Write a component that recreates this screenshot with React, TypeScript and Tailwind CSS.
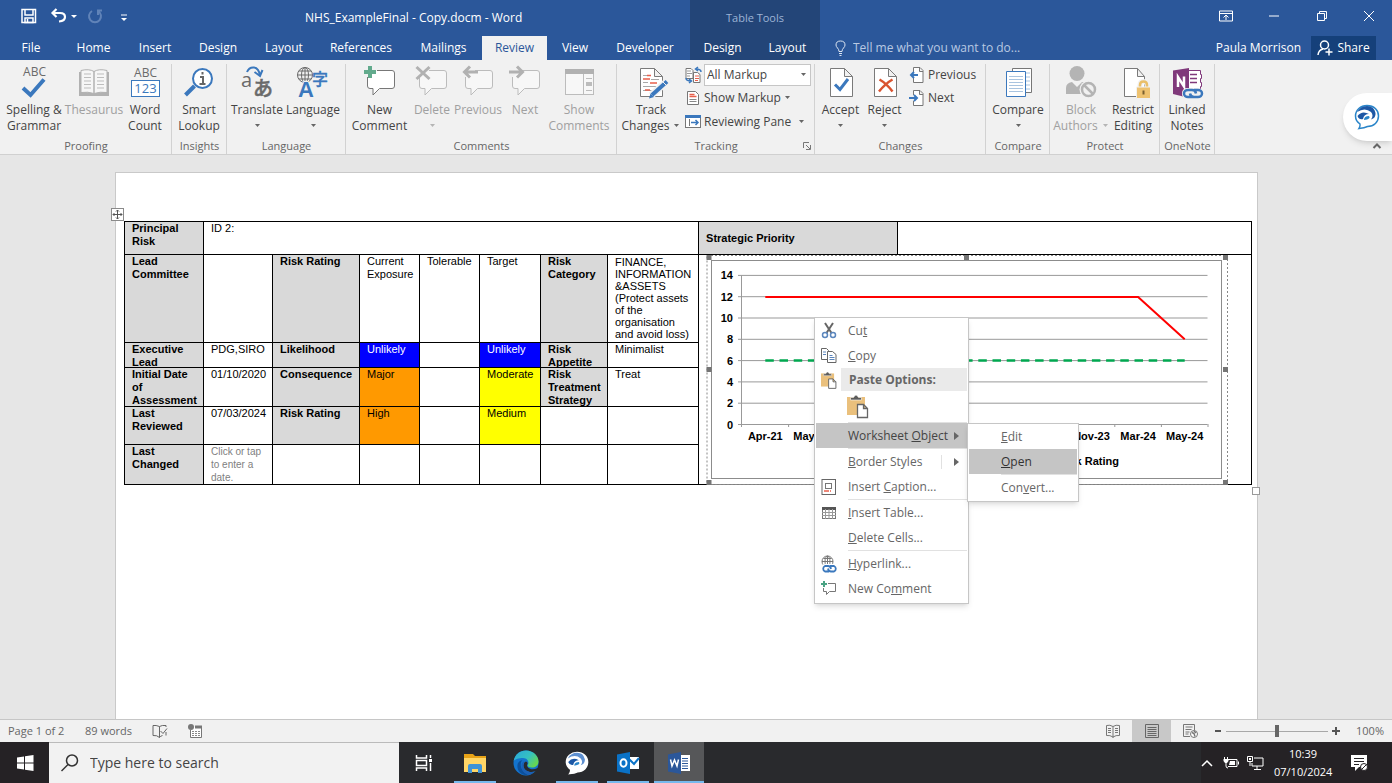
import type {ReactNode} from 'react';

const GREY = '#6a6a6a';
const BLUE = '#3b78bd';
const DIM = '#b1b1b1';

const Icon = ({w = 40, h = 38, children}: { w?: number; h?: number; children: ReactNode }) => (
    <svg width={w} height={h} viewBox={`0 0 ${w} ${h}`} fill="none" className="shrink-0 overflow-visible" aria-hidden="true">
        {children}
    </svg>
);

const Caret = ({dim = false}: { dim?: boolean }) => (
    <svg width="7" height="4" viewBox="0 0 7 4" className="inline-block shrink-0" aria-hidden="true">
        <path d="M1 0h5L3.500 3z" fill={dim ? '#b5b5b5' : '#666'}/>
    </svg>
);

/* ---------- large ribbon icons, 40 x 38 ---------- */

const DocShape = () => (
    <path d="M9.500 4.500h14l8 8v20h-22zM23.500 4.500v8h8" fill="#fff" stroke="#7a7a7a"/>
);

const SpellingIcon = () => (
    <Icon>
        <text x="20.500" y="12" textAnchor="middle" fontSize="12" fontWeight="500" fill={GREY} fontFamily="Open Sans">ABC</text>
        <path d="M9 24l7.500 7L30 15.500" stroke={BLUE} strokeWidth="4"/>
    </Icon>
);

const ThesaurusIcon = () => (
    <Icon>
        <path d="M5 8v24h30V8z" fill={DIM}/>
        <path d="M7 6.500q8-2 13 1v22q-6-2-13-1zM33 6.500q-8-2-13 1v22q6-2 13-1z" fill="#f6f6f6" stroke={DIM}/>
        <path d="M10 10h7M10 13.500h7M10 17h7M10 20.500h7M10 24h7M23 10h7M23 13.500h7M23 17h7M23 20.500h7M23 24h7" stroke="#bdbdbd"/>
    </Icon>
);

const WordCountIcon = () => (
    <Icon>
        <text x="20.500" y="13" textAnchor="middle" fontSize="12" fontWeight="500" fill={GREY} fontFamily="Open Sans">ABC</text>
        <rect x="6.500" y="16.500" width="28" height="16" fill="#fff" stroke={BLUE}/>
        <text x="20.500" y="29" textAnchor="middle" fontSize="13" fill={BLUE} fontFamily="Open Sans">123</text>
    </Icon>
);

const LookupIcon = () => (
    <Icon>
        <path d="M15.500 22l-9 9" stroke={BLUE} strokeWidth="4"/>
        <circle cx="23.500" cy="14.500" r="9.500" fill="#fff" stroke={BLUE} strokeWidth="2"/>
        <path d="M23.500 8v2.500M21 13h3v6.500M20.500 20h6" stroke="#666" strokeWidth="2"/>
    </Icon>
);

const TranslateIcon = () => (
    <Icon>
        <text x="4" y="23" fontSize="20" fontWeight="500" fill={GREY} fontFamily="Open Sans">a</text>
        <text x="16" y="32" fontSize="20" fontWeight="500" fill={GREY} stroke={GREY} strokeWidth=".500"
              fontFamily="Noto Sans CJK JP">あ</text>
        <path d="M10 8q2-5 7-4.500t6 8.500M17.500 8l5.500 4 2.500-6" stroke={BLUE} strokeWidth="2"/>
    </Icon>
);

const LanguageIcon = () => (
    <Icon>
        <circle cx="12" cy="11" r="7.500" stroke={GREY}/>
        <ellipse cx="12" cy="11" rx="3.500" ry="7.500" stroke={GREY}/>
        <path d="M4.500 11h15M6 7h12M6 15h12M12 3.500v15" stroke={GREY}/>
        <text x="19" y="21" fontSize="16" fontWeight="500" fill={BLUE} stroke={BLUE} strokeWidth=".300"
              fontFamily="Noto Sans CJK JP">字</text>
        <text x="5" y="33" fontSize="22" fontWeight="600" fill={BLUE} stroke="#f1f1f1" strokeWidth="2" paintOrder="stroke"
              fontFamily="Liberation Sans">A</text>
    </Icon>
);

const BubbleIcon = ({mark, dim = true}: { mark: ReactNode; dim?: boolean }) => (
    <Icon>
        <path d="M7.500 13v9q0 2.500 2.500 2.500h3v6.500l6.500-6.500H32q2.500 0 2.500-2.500V9q0-2.500-2.500-2.500H17"
              fill={dim ? '#f7f7f7' : '#fff'} stroke={dim ? '#bcbcbc' : '#777'}/>
        {mark}
    </Icon>
);

const PlusMark = () => <path d="M10 2v12M4 8h12" stroke="#62aa8c" strokeWidth="4"/>;
const CrossMark = () => <path d="M4.500 3l13 12M17.500 3l-13 12" stroke={DIM} strokeWidth="3"/>;
const LeftMark = () => <path d="M20 8H7M12 2.500L6.500 8l5.500 5.500" stroke={DIM} strokeWidth="3"/>;
const RightMark = () => <path d="M4 8h13M12 2.500L17.500 8 12 13.500" stroke={DIM} strokeWidth="3"/>;

const ShowCommentsIcon = () => (
    <Icon>
        <rect x="6.500" y="5.500" width="28" height="25" fill="#f7f7f7" stroke="#bcbcbc"/>
        <rect x="6" y="5" width="29" height="5" fill={DIM}/>
        <path d="M24.500 10v20M27 14.500h6M27 26.500h6" stroke="#bcbcbc"/>
        <path d="M27 20h6" stroke="#bcbcbc" strokeWidth="4"/>
    </Icon>
);

const TrackIcon = () => (
    <Icon>
        <DocShape/>
        <path d="M12 11.500h8M12 18.500h5M12 22.500h13M12 26.500h10M20 15.500h8" stroke="#a8a8a8"/>
        <path d="M16 11.500h4M12 15h7M19 19h7M14 26h5" stroke="#e8604c" strokeWidth="1.500"/>
        <path d="M36 17.500L20 31.500" stroke="#f1f1f1" strokeWidth="7"/>
        <path d="M36 17.500L21 31" stroke={BLUE} strokeWidth="4"/>
        <path d="M19.500 29.500l3.500 3.500-5 1.500z" fill={BLUE}/>
        <path d="M32 18l3.500 3.500" stroke="#f1f1f1"/>
    </Icon>
);

const AcceptIcon = () => (
    <Icon><DocShape/><path d="M14 20.500l5 5L27 15" stroke={BLUE} strokeWidth="3"/></Icon>
);

const RejectIcon = () => (
    <Icon><DocShape/><path d="M14.500 15.500q7 4 13 12M27.500 15.500q-7 4-13.500 12" stroke="#d9532f" strokeWidth="2.500"/></Icon>
);

const CompareIcon = () => (
    <Icon>
        <path d="M14.500 4.500h19v24h-19z" fill="#fff" stroke="#777"/>
        <path d="M28 9h4M28 13h4M28 17h4M28 21h4M28 25h4" stroke="#a9c4e0"/>
        <path d="M8.500 7.500h19v25h-19z" fill="#fff" stroke={BLUE}/>
        <path d="M11 12.500h14M11 15.500h14M11 18.500h14M11 21.500h14M11 24.500h14M11 27.500h14" stroke="#a9c4e0"/>
    </Icon>
);

const BlockIcon = () => (
    <Icon>
        <circle cx="16" cy="9.500" r="7.500" fill="#b4b4b4"/>
        <path d="M5 30v-6q0-5 6-6l5 5 5-5q6 1 6 6v6z" fill="#b4b4b4"/>
        <circle cx="27.500" cy="25.500" r="9" fill="#f1f1f1"/>
        <circle cx="27.500" cy="25.500" r="6.500" fill="#f1f1f1" stroke="#b4b4b4" strokeWidth="2.500"/>
        <path d="M23 21l9 9" stroke="#b4b4b4" strokeWidth="2.500"/>
    </Icon>
);

const RestrictIcon = () => (
    <Icon>
        <path d="M11.500 4.500h13l7 8v20h-20zM24.500 4.500v8h7" fill="#fff" stroke="#7a7a7a"/>
        <path d="M27 24v-3q0-3.500 3.500-3.500T34 21v3" stroke="#f1f1f1" strokeWidth="5"/>
        <path d="M27 24v-3q0-3.500 3.500-3.500T34 21v3" stroke="#eabf69" strokeWidth="2.500"/>
        <path d="M23.500 23h14v11.500h-14z" fill="#eec270" stroke="#f1f1f1"/>
        <path d="M30.500 26.500v4" stroke="#7a6030" strokeWidth="2"/>
    </Icon>
);

const NotesIcon = () => (
    <Icon>
        <path d="M20.500 6.500h13v4h1v4h-1v4h1v4h-1v5h-13z" fill="#fff" stroke="#80397b"/>
        <path d="M23 10.500h7M23 14.500h7M23 18.500h7" stroke="#80397b" strokeWidth="1.500"/>
        <path d="M6 6.500L22 4v30L6 30z" fill="#80397b"/>
        <path d="M11 23v-10l6 9.500V12.500" stroke="#fff" strokeWidth="2.500"/>
        <rect x="15" y="24" width="21" height="11" fill="#f1f1f1" rx="5"/>
        <path d="M25 33h-4a4 3.500 0 010-7h4q3.500 0 4 3.500M27 26h4a4 3.500 0 010 7h-4q-3.500 0-4-3.500" stroke={BLUE} strokeWidth="2.500"/>
    </Icon>
);

/* ---------- small icons ---------- */

const MarkupViewIcon = () => (
    <Icon w={16} h={16}>
        <path d="M1 1.500h5l2 2v8H1zM8.500 5.500h4l2.500 2v8H8.500z" fill="#fff" stroke="#777"/>
        <path d="M2 4h4M2 6.500h5M2 9h3" stroke="#999"/>
        <path d="M10 9h4M10 11.500h4M10 13.500h3" stroke="#e8604c"/>
        <path d="M16 5q0-3-5-3M13 0l-2.500 2L13 4M1 11q0 3 5 3M4 12l2.500 2L4 16" stroke={BLUE} strokeWidth="1.500"/>
    </Icon>
);

const ShowMarkupIcon = () => (
    <Icon w={16} h={16}>
        <path d="M2.500 1.500h8l3 3v10h-11z" fill="#fff" stroke="#777"/>
        <path d="M4.500 4.500h5M4.500 6.500h7" stroke="#e8604c" strokeWidth="1.500"/>
        <path d="M4.500 9.500h7M4.500 11.500h7" stroke="#888"/>
    </Icon>
);

const PaneIcon = () => (
    <Icon w={16} h={16}>
        <rect x=".500" y="1.500" width="15" height="12" fill="#fff" stroke="#777"/>
        <path d="M0 2.500h16" stroke={BLUE} strokeWidth="3"/>
        <path d="M4.500 5v7" stroke="#777"/>
        <path d="M6 8.500h7M10.500 6l2.500 2.500-2.500 2.500" stroke={BLUE} strokeWidth="1.500"/>
    </Icon>
);

const DocArrowIcon = ({back = false}: { back?: boolean }) => (
    <Icon w={16} h={16}>
        <path d="M4.500 5V.500H11l3 3v12H4.500V11M10.500.500v4H14" fill="#fff" stroke="#777"/>
        <path d={back ? 'M9 8H2M5 5L2 8l3 3' : 'M0 8h7M5 5l3 3-3 3'} stroke={BLUE} strokeWidth="2"/>
    </Icon>
);

const CutIcon = () => (
    <Icon w={16} h={16}>
        <path d="M4 0l6.500 10M12 0L5.500 10" stroke="#666" strokeWidth="2"/>
        <circle cx="4" cy="12" r="2.500" stroke="#5b86bd" strokeWidth="1.500"/>
        <circle cx="12" cy="12" r="2.500" stroke="#5b86bd" strokeWidth="1.500"/>
    </Icon>
);

const CopyIcon = () => (
    <Icon w={16} h={16}>
        <path d="M.500.500h5l2 2v9h-7z" fill="#fff" stroke="#666"/>
        <path d="M6.500 3.500h5l3.500 3v8H6.500z" fill="#fff" stroke="#666"/>
        <path d="M2 4h3M2 6.500h3M8.500 7.500h3M8.500 9.500h5M8.500 11.500h5" stroke="#5b86bd"/>
    </Icon>
);

const PasteIcon = ({size = 16}: { size?: number }) => (
    <svg width={size} height={size} viewBox="0 0 22 22" fill="none" className="shrink-0 overflow-visible" aria-hidden="true">
        <path d="M0 2h18v18H0z" fill="#eac07c"/>
        <path d="M3.500 5V2.500h3q2.500-5 5 0h3V5z" fill="#5c5c5c" stroke="#fff" strokeWidth=".600"/>
        <path d="M10.500 9.500h6l4 4v9h-10zM16.500 9.500v4h4" fill="#fff" stroke="#666" strokeWidth="1.300"/>
    </svg>
);

const CaptionIcon = () => (
    <Icon w={16} h={16}>
        <rect x="1" y=".500" width="13.500" height="15" fill="#fff" stroke="#666"/>
        <rect x="4.500" y="4.500" width="6" height="5" stroke="#777"/>
        <path d="M3 12h5M9 12h1" stroke="#e8604c" strokeWidth="1.500"/>
    </Icon>
);

const TableIcon = () => (
    <Icon w={16} h={16}>
        <rect x="1.500" y="2.500" width="13" height="11" fill="#fff" stroke="#777"/>
        <path d="M1 3.500h14" stroke="#555" strokeWidth="3"/>
        <path d="M1 7.500h14M1 10.500h14M4.500 4v10M8 4v10M11.500 4v10" stroke="#999"/>
    </Icon>
);

const LinkIcon = () => (
    <Icon w={16} h={16}>
        <circle cx="6.500" cy="5.500" r="5.500" stroke="#777"/>
        <path d="M1 5.500h11M6.500 0v11M2.500 2.500h8M2.500 8.500h8" stroke="#777"/>
        <ellipse cx="6.500" cy="5.500" rx="2.500" ry="5.500" stroke="#777"/>
        <rect x="0" y="8" width="17" height="9" rx="4" fill="#fff"/>
        <path d="M8 15.500H4a3 3 0 010-5.500h3q2.500 0 3 3M9 10h4a3 3 0 010 5.500h-3q-2.500 0-3-3" stroke={BLUE} strokeWidth="1.800"/>
    </Icon>
);

const CommentIcon = () => (
    <Icon w={16} h={16}>
        <path d="M7 2.500h7.500v8H8.500l-3 3v-3h-3V7" stroke="#777"/>
        <path d="M3 0v6M0 3h6" stroke="#4aa384" strokeWidth="2"/>
    </Icon>
);

const ChatLogo = ({size, light = false}: { size: number; light?: boolean }) => (
    <svg width={size} height={size} viewBox="0 0 26 26" fill="none" aria-hidden="true">
        <path d="M13 1.500c7 0 11.500 4.500 11.500 10.500S20 22.500 13.500 22.500q-3 1.500-8.500 2 1.500-2 1-4.500C3 18 1.500 15.500 1.500 12 1.500 6 6.500 1.500 13 1.500z"
              fill="#fff" stroke={light ? '#fff' : '#2a85c9'} strokeWidth="1.500"/>
        <path d="M3 8q3.500-6 10-6 7 0 8.500 7 .500 5-4.500 6.500 3-4 0-7.500Q11 3 3 8z" fill={light ? '#5d8fd0' : '#1d57a5'}/>
        <path d="M3.500 12Q8 6 15 10q-5 0-6 5-4 1-5.500-3z" fill="#1d57a5"/>
        <path d="M10 16q0-4 5-4 2.500 3-5 4z" fill="#2a85c9"/>
    </svg>
);

/* ---------- title bar and tabs ---------- */

const TABS = [
    {name: 'File', width: 'w-[62px]'},
    {name: 'Home', width: 'w-[63px]'},
    {name: 'Insert', width: 'w-[60px]'},
    {name: 'Design', width: 'w-[66px]'},
    {name: 'Layout', width: 'w-[66px]'},
    {name: 'References', width: 'w-[88px]'},
    {name: 'Mailings', width: 'w-[77px]'},
    {name: 'Review', width: 'w-[65px]'},
    {name: 'View', width: 'w-[56px]'},
    {name: 'Developer', width: 'w-[84px]'},
];

const TitleBar = () => (
    <header className="flex h-[60px] shrink-0 bg-[#2b579a] text-white">
        <div className="flex w-[690px] shrink-0 flex-col">
            <div className="flex h-9 items-center pl-[21px]">
                <button aria-label="Save" className="mb-1">
                    <Icon w={16} h={16}>
                        <path d="M1 1.500h13.500v13H1zM4 1.500v5.500h8V1.500" stroke="#fff" strokeWidth="1.500"/>
                        <path d="M4 10h8v4.500H4zM6.500 11v3" stroke="#fff" strokeWidth="1.500"/>
                    </Icon>
                </button>
                <button aria-label="Undo" className="mb-1 ml-3.5 flex items-center gap-1">
                    <Icon w={16} h={16}>
                        <path d="M5.500 1L1.500 5l4 4M2 5h7q5 0 5 4t-6 4.500" stroke="#fff" strokeWidth="2.200"/>
                    </Icon>
                    <svg width="6" height="3" aria-hidden="true"><path d="M0 0h6L3 3z" fill="#fff"/></svg>
                </button>
                <button aria-label="Repeat" className="mb-1 ml-2.5">
                    <Icon w={16} h={16}>
                        <path d="M5 3a6 6 0 106 0M11 7V2.500h4" stroke="#6083b8" strokeWidth="2"/>
                    </Icon>
                </button>
                <button aria-label="Customise toolbar" className="ml-[18px]">
                    <svg width="6" height="8" aria-hidden="true"><path d="M0 1h6" stroke="#fff"/><path d="M0 4h6L3 7z" fill="#fff"/></svg>
                </button>
                <h1 className="ml-[178px] text-xs">NHS_ExampleFinal - Copy.docm - Word</h1>
            </div>
            <nav className="flex h-6 text-xs">
                {TABS.map(({name, width}) => (
                    <button key={name} className={`${width} ${name === 'Review' ? 'bg-[#f1f1f1] text-[#2b579a]' : ''}`}>
                        {name}
                    </button>
                ))}
            </nav>
        </div>
        <div className="flex w-[130px] shrink-0 flex-col bg-[#234578] text-xs">
            <div className="flex h-9 items-center justify-center text-[11px] text-[#9db4d6]">Table Tools</div>
            <nav className="grid h-6 grid-cols-2">
                <button>Design</button>
                <button>Layout</button>
            </nav>
        </div>
        <div className="flex min-w-0 flex-1 flex-col text-xs">
            <div className="flex h-9 items-center justify-end gap-[33px] pb-1 pr-4">
                <button aria-label="Ribbon display options">
                    <Icon w={14} h={12}>
                        <path d="M.500 1h13v10H.500zM.500 3.500h13M7 10V5.500M4.500 7.500L7 5l2.500 2.500" stroke="#fff"/>
                    </Icon>
                </button>
                <button aria-label="Minimise"><Icon w={16} h={12}><path d="M3 6h10" stroke="#fff"/></Icon></button>
                <button aria-label="Restore">
                    <Icon w={14} h={12}><path d="M2.500 3.500h7v7h-7zM4.500 3V1.500h7v7H10" stroke="#fff"/></Icon>
                </button>
                <button aria-label="Close"><Icon w={14} h={12}><path d="M2 1l10 10M12 1L2 11" stroke="#fff"/></Icon></button>
            </div>
            <div className="flex h-6 items-center pr-4">
                <label className="ml-[15px] flex min-w-0 flex-1 items-center gap-1.5">
                    <Icon w={12} h={16}>
                        <path d="M4 11.500q0-2-1.500-3.500T1 5q0-4 4.500-4T10 5q0 1.500-1.500 3T7 11.500zM4 13.500h3M4.500 15.500h2" stroke="#dbe4f1"/>
                    </Icon>
                    <input aria-label="Tell me" placeholder="Tell me what you want to do..."
                           className="w-full min-w-0 bg-transparent outline-none placeholder:text-[#b9c9e2]"/>
                </label>
                <span className="mr-2.5">Paula Morrison</span>
                <button className="flex h-6 w-[65px] items-center justify-center gap-1 bg-[#15407a]">
                    <Icon w={16} h={16}>
                        <circle cx="7.500" cy="5" r="4" stroke="#fff" strokeWidth="1.500"/>
                        <path d="M1 15q.500-5 5-6M12 8.500v7M8.500 12h7" stroke="#fff" strokeWidth="1.500"/>
                    </Icon>
                    Share
                </button>
            </div>
        </div>
    </header>
);

/* ---------- ribbon ---------- */

interface BigButtonProps {
    icon: ReactNode;
    first: string;
    second?: ReactNode;
    width: string;
    dim?: boolean;
}

const BigButton = ({icon, first, second, width, dim}: BigButtonProps) => (
    <button className={`${width} flex shrink-0 flex-col items-center whitespace-nowrap ${dim ? 'text-[#a0a0a0]' : ''}`} disabled={dim}>
        {icon}
        <span>{first}</span>
        <span className="flex h-4 items-center gap-1">{second}</span>
    </button>
);

const Group = ({name, width, children}: { name: string; width: string; children: ReactNode }) => (
    <section className={`${width} flex shrink-0 flex-col`}>
        <div className="relative flex flex-1">
            {children}
            <span className="absolute -bottom-4 right-0 top-0 w-px bg-[#d2d2d2]"/>
        </div>
        <h2 className="h-4 text-center text-[11px] text-[#666]">{name}</h2>
    </section>
);

const Ribbon = () => (
    <div className="relative flex h-[95px] shrink-0 border-b border-[#d0d0d0] bg-[#f1f1f1] pt-1 text-[12px] leading-4 text-[#444]">
        <Group name="Proofing" width="w-[172px]">
            <BigButton icon={<SpellingIcon/>} first="Spelling &" second="Grammar" width="w-[68px]"/>
            <BigButton icon={<ThesaurusIcon/>} first="Thesaurus" width="w-[52px]" dim/>
            <BigButton icon={<WordCountIcon/>} first="Word" second="Count" width="w-[50px]"/>
        </Group>
        <Group name="Insights" width="w-[55px]">
            <BigButton icon={<LookupIcon/>} first="Smart" second="Lookup" width="w-[54px]"/>
        </Group>
        <Group name="Language" width="w-[119px]">
            <BigButton icon={<TranslateIcon/>} first="Translate" second={<Caret/>} width="w-[60px]"/>
            <BigButton icon={<LanguageIcon/>} first="Language" second={<Caret/>} width="w-[52px]"/>
        </Group>
        <Group name="Comments" width="w-[271px]">
            <BigButton icon={<BubbleIcon dim={false} mark={<PlusMark/>}/>} first="New" second="Comment" width="w-[67px]"/>
            <BigButton icon={<BubbleIcon mark={<CrossMark/>}/>} first="Delete" second={<Caret dim/>} width="w-[38px]" dim/>
            <BigButton icon={<BubbleIcon mark={<LeftMark/>}/>} first="Previous" width="w-[54px]" dim/>
            <BigButton icon={<BubbleIcon mark={<RightMark/>}/>} first="Next" width="w-[40px]" dim/>
            <BigButton icon={<ShowCommentsIcon/>} first="Show" second="Comments" width="w-[68px]" dim/>
        </Group>
        <Group name="Tracking" width="w-[198px]">
            <BigButton icon={<TrackIcon/>} first="Track" second={<>Changes <Caret/></>} width="w-[68px]"/>
            <div className="flex flex-1 flex-col pr-1">
                <label className="flex items-center gap-[3px]">
                    <MarkupViewIcon/>
                    <span className="relative flex flex-1 items-center">
                        <select aria-label="Display for review"
                                className="h-[22px] w-full appearance-none border border-[#c6c6c6] bg-white px-0.5">
                            <option>All Markup</option>
                        </select>
                        <span className="absolute right-1 flex"><Caret/></span>
                    </span>
                </label>
                <button className="flex h-6 items-center gap-[3px]"><ShowMarkupIcon/>Show Markup <Caret/></button>
                <button className="flex h-6 items-center gap-[3px]">
                    <PaneIcon/>Reviewing Pane <span className="ml-1 flex"><Caret/></span>
                </button>
            </div>
            <button aria-label="Tracking options" className="absolute -bottom-3 right-1">
                <Icon w={8} h={8}><path d="M.500 6V.500H6M3 3l4 4M7.500 3v4.500H3" stroke="#777"/></Icon>
            </button>
        </Group>
        <Group name="Changes" width="w-[171px]">
            <BigButton icon={<AcceptIcon/>} first="Accept" second={<Caret/>} width="w-[51px]"/>
            <BigButton icon={<RejectIcon/>} first="Reject" second={<Caret/>} width="w-[37px]"/>
            <div className="flex flex-col pl-1.5">
                <button className="flex h-[22px] items-center gap-[3px]"><DocArrowIcon back/>Previous</button>
                <button className="flex h-6 items-center gap-[3px]"><DocArrowIcon/>Next</button>
            </div>
        </Group>
        <Group name="Compare" width="w-[64px]">
            <BigButton icon={<CompareIcon/>} first="Compare" second={<Caret/>} width="w-[64px]"/>
        </Group>
        <Group name="Protect" width="w-[110px]">
            <BigButton icon={<BlockIcon/>} first="Block" second={<>Authors <Caret dim/></>} width="w-[62px]" dim/>
            <BigButton icon={<RestrictIcon/>} first="Restrict" second="Editing" width="w-[42px]"/>
        </Group>
        <Group name="OneNote" width="w-[55px]">
            <BigButton icon={<NotesIcon/>} first="Linked" second="Notes" width="w-[54px]"/>
        </Group>
        <button aria-label="Chat"
                className="absolute right-0 top-[33px] flex h-12 w-[49px] items-center rounded-l-full bg-white pl-[11px] shadow-md">
            <ChatLogo size={26}/>
        </button>
        <button aria-label="Collapse the ribbon" className="absolute bottom-1 right-2.5">
            <Icon w={10} h={8}><path d="M1.500 6L5 2.500 8.500 6" stroke="#666" strokeWidth="2"/></Icon>
        </button>
    </div>
);

/* ---------- document ---------- */

const MONTHS = ['Apr-21', 'May-21', '', '', '', '', '', 'Nov-23', 'Mar-24', 'May-24'];
const STEP = 46.6;
const yOf = (v: number) => 169.5 - v * 10.65;
const xOf = (i: number) => 43 + STEP * (i + 0.5);

const RiskChart = () => (
    <svg width="531" height="229" viewBox="0 0 531 229" className="relative block overflow-visible"
         fontFamily="Liberation Sans" fontWeight="700" fontSize="11">
        <rect x="8" y=".500" width="520.500" height="229" fill="#fff" stroke="#888" strokeDasharray="2 2"/>
        <rect x="12.500" y="5.500" width="510" height="218" fill="#fff" stroke="#8c8c8c"/>
        {[0, 2, 4, 6, 8, 10, 12, 14].map((v) => (
            <g key={v}>
                <path d={`M39 ${yOf(v)}H508.500`} stroke="#999"/>
                <text x="34" y={yOf(v) + 4} textAnchor="end">{v}</text>
            </g>
        ))}
        <path d={`M42.500 ${yOf(14)}V172`} stroke="#999"/>
        {MONTHS.map((m, i) => (
            <g key={i}>
                <path d={`M${43 + STEP * (i + 1)} 169v3`} stroke="#999"/>
                <text x={xOf(i)} y="185" textAnchor="middle">{m}</text>
            </g>
        ))}
        <path d={`M${xOf(0)} 105.500H${xOf(9)}`} stroke="#00a850" strokeWidth="2.400" strokeDasharray="8.500 5.700"/>
        <path d={`M${xOf(0)} 42H${xOf(8)}L${xOf(9)} ${yOf(8)}`} stroke="#f00" strokeWidth="2" fill="none"/>
        <text x="420" y="210" textAnchor="end">Risk Rating</text>
        <path d="M7.500 0h5v5h-5zM265 0h5v5h-5zM524 0h5v5h-5zM7.500 112h5v5h-5zM524 112h5v5h-5zM7.500 225h5v5h-5zM524 225h5v5h-5z"
              fill="#757575"/>
    </svg>
);

const FILLS = {
    grey: 'bg-[#d9d9d9] font-bold',
    blue: 'bg-[#0000ff] text-white',
    orange: 'bg-[#ff9900]',
    yellow: 'bg-[#ffff00]',
    none: '',
};

interface CellProps {
    fill?: keyof typeof FILLS;
    text?: ReactNode;
    span?: number;
}

const Cell = ({fill = 'none', text, span}: CellProps) => (
    <td colSpan={span} className={`border border-black p-0 align-top ${FILLS[fill]}`}>
        <div className="h-0 whitespace-nowrap pl-[7px]">{text}</div>
    </td>
);

const RiskTable = () => (
    <table className="w-full table-fixed border-collapse text-[11px] leading-[13px] text-black [font-family:'Liberation_Sans',sans-serif]">
        <colgroup>
            <col className="w-[79px]"/>
            <col className="w-[69px]"/>
            <col className="w-[87px]"/>
            <col className="w-[60px]"/>
            <col className="w-[60px]"/>
            <col className="w-[61px]"/>
            <col className="w-[67px]"/>
            <col className="w-[91px]"/>
            <col className="w-[199px]"/>
            <col/>
        </colgroup>
        <tbody>
        <tr className="h-[33px]">
            <Cell fill="grey" text={<>Principal<br/>Risk</>}/>
            <Cell text="ID 2:" span={7}/>
            <th className="border border-black bg-[#d9d9d9] py-0 pl-[7px] text-left align-middle">Strategic Priority</th>
            <Cell/>
        </tr>
        <tr className="h-[88px]">
            <Cell fill="grey" text={<>Lead<br/>Committee</>}/>
            <Cell/>
            <Cell fill="grey" text="Risk Rating"/>
            <Cell text={<>Current<br/>Exposure</>}/>
            <Cell text="Tolerable"/>
            <Cell text="Target"/>
            <Cell fill="grey" text={<>Risk<br/>Category</>}/>
            <Cell text={
                <p className="pt-px leading-[12px]">
                    FINANCE,<br/>INFORMATION<br/>&amp;ASSETS<br/>(Protect assets<br/>of the<br/>organisation<br/>and avoid loss)
                </p>
            }/>
            <td colSpan={2} rowSpan={5} className="border border-black p-0 align-top">
                <div className="h-0"><RiskChart/></div>
            </td>
        </tr>
        <tr className="h-[25px]">
            <Cell fill="grey" text={<>Executive<br/>Lead</>}/>
            <Cell text="PDG,SIRO"/>
            <Cell fill="grey" text="Likelihood"/>
            <Cell fill="blue" text="Unlikely"/>
            <Cell/>
            <Cell fill="blue" text="Unlikely"/>
            <Cell fill="grey" text={<>Risk<br/>Appetite</>}/>
            <Cell text="Minimalist"/>
        </tr>
        <tr className="h-[39px]">
            <Cell fill="grey" text={<>Initial Date<br/>of<br/>Assessment</>}/>
            <Cell text="01/10/2020"/>
            <Cell fill="grey" text="Consequence"/>
            <Cell fill="orange" text="Major"/>
            <Cell/>
            <Cell fill="yellow" text="Moderate"/>
            <Cell fill="grey" text={<>Risk<br/>Treatment<br/>Strategy</>}/>
            <Cell text="Treat"/>
        </tr>
        <tr className="h-[38px]">
            <Cell fill="grey" text={<>Last<br/>Reviewed</>}/>
            <Cell text="07/03/2024"/>
            <Cell fill="grey" text="Risk Rating"/>
            <Cell fill="orange" text="High"/>
            <Cell/>
            <Cell fill="yellow" text="Medium"/>
            <Cell/>
            <Cell/>
        </tr>
        <tr className="h-[40px]">
            <Cell fill="grey" text={<>Last<br/>Changed</>}/>
            <Cell text={<span className="text-[10px] text-[#808080]">Click or tap<br/>to enter a<br/>date.</span>}/>
            <Cell/>
            <Cell/>
            <Cell/>
            <Cell/>
            <Cell/>
            <Cell/>
        </tr>
        </tbody>
    </table>
);

const Document = () => (
    <main className="min-h-0 flex-1 overflow-hidden bg-[#e6e6e6] pl-[115px] pr-[134px] pt-[17px]">
        <div className="h-full border border-b-0 border-[#c9c9c9] bg-white pl-2 pr-[5px] pt-12">
            <div className="relative">
                <RiskTable/>
                <span className="absolute -left-[13px] -top-[13px] flex border border-[#8a8a8a] bg-white">
                    <Icon w={11} h={11}>
                        <path d="M5.500 1v9M1 5.500h9M4 2.500l1.500-1.500L7 2.500M4 8.500L5.500 10 7 8.500M2.500 4L1 5.500 2.500 7M8.500 4L10 5.500 8.500 7" stroke="#555"/>
                    </Icon>
                </span>
                <span className="absolute -bottom-2.5 -right-2 size-2 border border-[#9a9a9a] bg-white"/>
            </div>
        </div>
    </main>
);

/* ---------- context menu ---------- */

const ITEM = 'flex h-[25px] w-full items-center whitespace-nowrap';

const MenuItem = ({icon, arrow, active, children}: {
    icon?: ReactNode;
    arrow?: ReactNode;
    active?: boolean;
    children: ReactNode
}) => (
    <button className={`${ITEM} pl-[5px] ${active ? 'bg-[#c5c5c5] text-[#444]' : ''}`}>
        <span className="flex w-[27px] shrink-0">{icon}</span>
        <span className="flex-1 text-left">{children}</span>
        {arrow}
    </button>
);

const Arrow = () => (
    <svg width="5" height="8" className="mr-2" aria-hidden="true"><path d="M0 0l5 4-5 4z" fill="#666"/></svg>
);

const Rule = () => <hr className="ml-8 border-[#e1e1e1]"/>;

const ContextMenu = () => (
    <div className="absolute left-[814px] top-[317px] w-[155px] border border-[#c6c6c6] bg-white px-px pb-0.5 text-xs text-[#666] shadow-md">
        <MenuItem icon={<CutIcon/>}>Cu<u>t</u></MenuItem>
        <MenuItem icon={<CopyIcon/>}><u>C</u>opy</MenuItem>
        <div className="flex h-[23px] items-center pl-[5px]">
            <span className="flex w-5"><PasteIcon/></span>
            <span className="flex h-full flex-1 items-center bg-[#eaeaea] pl-2 font-bold">Paste Options:</span>
        </div>
        <button aria-label="Keep source formatting" className="ml-[31px] flex h-[31px] items-start pt-1"><PasteIcon size={22}/></button>
        <Rule/>
        <MenuItem active arrow={<Arrow/>}>Worksheet <u>O</u>bject</MenuItem>
        <Rule/>
        <MenuItem arrow={<><span className="mr-3 h-3.5 w-px bg-[#e1e1e1]"/><Arrow/></>}><u>B</u>order Styles</MenuItem>
        <MenuItem icon={<CaptionIcon/>}>Insert <u>C</u>aption...</MenuItem>
        <Rule/>
        <MenuItem icon={<TableIcon/>}><u>I</u>nsert Table...</MenuItem>
        <MenuItem><u>D</u>elete Cells...</MenuItem>
        <Rule/>
        <MenuItem icon={<LinkIcon/>}><u>H</u>yperlink...</MenuItem>
        <MenuItem icon={<CommentIcon/>}>New Co<u>m</u>ment</MenuItem>
        <div className="absolute left-[152px] top-[105px] w-[112px] border border-[#c6c6c6] bg-white px-px pb-px shadow-md">
            <button className={`${ITEM} pl-8`}><u>E</u>dit</button>
            <button className={`${ITEM} bg-[#c5c5c5] pl-8 text-[#333]`}><u>O</u>pen</button>
            <Rule/>
            <button className={`${ITEM} pl-8`}>Con<u>v</u>ert...</button>
        </div>
    </div>
);

/* ---------- status bar and taskbar ---------- */

const StatusBar = () => (
    <footer className="flex h-[23px] shrink-0 items-center border-t border-[#c6c6c6] bg-[#f1f1f1] pl-2 text-[11px] text-[#666]">
        <span className="w-[77px]">Page 1 of 2</span>
        <span className="w-[67px]">89 words</span>
        <button aria-label="Proofing errors">
            <Icon w={16} h={14}>
                <path d="M7.500 2.500Q4 1 1 1.500v10q4-.500 6.500 2 1-1.500 3-2M7.500 2.500v11M7.500 2.500Q10 1 14 1.500V3M8.500 7l2.500 2.500 4-5M14 8v3.500" stroke="#666"/>
            </Icon>
        </button>
        <button aria-label="Macro recording" className="ml-5">
            <Icon w={14} h={14}>
                <path d="M2.500 6v7.500h11V2.500H7" fill="#fff" stroke="#777"/>
                <path d="M7 3h7" stroke="#777" strokeWidth="3"/>
                <path d="M4 7.500h8M4 9.500h8M4 11.500h8" stroke="#888" strokeDasharray="2 1"/>
                <circle cx="3" cy="3" r="3" fill="#777"/>
            </Icon>
        </button>
        <div className="ml-auto flex h-full items-center">
            <button aria-label="Read mode" className="mr-3">
                <Icon w={14} h={14}>
                    <path d="M7 2.500Q4 .500.500 1.500v10q3.500-.500 6.500 1.500 3-2 6.500-1.500v-10Q10 .500 7 2.500zM7 2.500V14" stroke="#777"/>
                    <path d="M2 4.500h3M2 6.500h3M2 8.500h3M9 4.500h3M9 6.500h3M9 8.500h3" stroke="#777"/>
                </Icon>
            </button>
            <button aria-label="Print layout" className="flex h-full w-[39px] items-center justify-center bg-[#c8c8c8]">
                <Icon w={14} h={14}>
                    <path d="M.500.500h13v13H.500zM2.500 3.500h9M2.500 5.500h9M2.500 7.500h9M2.500 9.500h9M2.500 11.500h9" stroke="#666"/>
                </Icon>
            </button>
            <button aria-label="Web layout" className="ml-3">
                <Icon w={15} h={14}>
                    <path d="M7 12.500H.500V.500h11V6M2.500 3h7M2.500 5.500h6M2.500 8h4M2.500 10h3" stroke="#777"/>
                    <circle cx="11" cy="10" r="3.500" fill="#fff" stroke="#777"/>
                    <path d="M9 8.500l2 1 1 3M11 7l2 2" stroke="#777" strokeWidth="1.500"/>
                </Icon>
            </button>
            <button aria-label="Zoom out" className="ml-4"><Icon w={8} h={8}><path d="M1 4h6" stroke="#555" strokeWidth="2"/></Icon></button>
            <input type="range" aria-label="Zoom" defaultValue={50}
                   className="mx-1 h-3 w-[102px] appearance-none bg-[linear-gradient(#a8a8a8,#a8a8a8)] bg-[length:100%_1px] bg-center bg-no-repeat [&::-webkit-slider-thumb]:h-3 [&::-webkit-slider-thumb]:w-1 [&::-webkit-slider-thumb]:appearance-none [&::-webkit-slider-thumb]:bg-[#666]"/>
            <button aria-label="Zoom in"><Icon w={8} h={8}><path d="M0 4h8M4 0v8" stroke="#555" strokeWidth="2"/></Icon></button>
            <span className="w-[52px] pr-2 text-right">100%</span>
        </div>
    </footer>
);

const TaskButton = ({name, state = '', children}: { name: string; state?: string; children: ReactNode }) => (
    <button aria-label={name} className={`flex h-full w-[50px] items-center justify-center ${state}`}>
        <span className="flex">{children}</span>
    </button>
);

const RUNNING = 'bg-[linear-gradient(#76b9ed,#76b9ed)] bg-[length:42px_2px] bg-bottom bg-no-repeat';

const TaskBar = () => (
    <div className="flex h-[41px] shrink-0 items-center bg-[#252225] text-white">
        <button aria-label="Start" className="flex h-full w-[49px] items-center justify-center">
            <Icon w={18} h={18}>
                <path d="M1 3.500l7-1v6H1zM9 2.300L17.500 1v7.500H9zM1 9.500h7v6l-7-1zM9 9.500h8.500V17L9 15.700z" fill="#fff"/>
            </Icon>
        </button>
        <label className="flex h-full w-[350px] items-center gap-3 border-t border-[#bbb] bg-[#f2f2f2] pl-3 text-[#444]">
            <Icon w={17} h={18}>
                <circle cx="11" cy="6.500" r="5.500" stroke="#333" strokeWidth="1.500"/>
                <path d="M7 10.500L.500 17" stroke="#333" strokeWidth="1.500"/>
            </Icon>
            <input aria-label="Search" placeholder="Type here to search"
                   className="min-w-0 flex-1 bg-transparent text-sm outline-none placeholder:text-[#444]"/>
        </label>
        <div className="flex h-full flex-1 gap-px bg-[#292a2d]">
            <TaskButton name="Task view">
                <Icon w={18} h={18}>
                    <path d="M1.500 1v3h10V1M1.500 17v-3h10v3M1.500 6.500h10v5h-10zM15.500 1v3M15.500 9v8" stroke="#fff" strokeWidth="1.500"/>
                    <path d="M14 5h3v3h-3z" fill="#fff"/>
                </Icon>
            </TaskButton>
            <TaskButton name="File Explorer" state={RUNNING}>
                <Icon w={24} h={20}>
                    <path d="M1 1h9l2 2h11v16H1z" fill="#e8a317"/>
                    <path d="M1 5h22v14H1z" fill="#ffd667"/>
                    <path d="M5 20v-7q0-2 2-2h10q2 0 2 2v7h-4v-4H9v4z" fill="#3d93d8"/>
                </Icon>
            </TaskButton>
            <TaskButton name="Edge">
                <svg width="26" height="26" viewBox="0 0 26 26" aria-hidden="true">
                    <defs>
                        <linearGradient id="edgeTop" x1="0" y1="0" x2="1" y2=".6">
                            <stop offset="0" stopColor="#2aa7dc"/>
                            <stop offset=".6" stopColor="#35c1c0"/>
                            <stop offset="1" stopColor="#66d652"/>
                        </linearGradient>
                    </defs>
                    <circle cx="13" cy="13" r="12.500" fill="#1373cd"/>
                    <path d="M.700 11C2 4 7 .500 13 .500c7 0 12.500 5 12.500 11 0 4-3 6-6.500 6-4 0-5-1.500-4-3 1-2 .500-6-5-6.500-4 0-8 1-9.300 3z" fill="url(#edgeTop)"/>
                    <path d="M9.500 10C6 13 7.500 22 16 25 6 26 3 18 5 13q1.500-2.500 4.500-3z" fill="#0c509c"/>
                    <path d="M14 15c0 4 6 5.500 10.500 3l.800.800-2 2C18 24 10 21 10.500 15q.500-3 2.500-3.500 2.500 1 1 3.500z" fill="#292a2d"/>
                    <path d="M10.500 15c-.500 5 5 8 11 6.500Q19 24.500 15 25 8 22 8.500 15q.500-3 3-4-1 2-1 4z" fill="#1b5fb4"/>
                </svg>
            </TaskButton>
            <TaskButton name="Jabber" state={RUNNING}><ChatLogo size={24} light/></TaskButton>
            <TaskButton name="Outlook" state={RUNNING}>
                <Icon w={24} h={22}>
                    <path d="M12 5h11v12H12z" fill="#fff"/>
                    <path d="M13 7l5 5 5-6" stroke="#0a72c7" strokeWidth="2"/>
                    <path d="M1 2.500L14 0v22L1 19.500z" fill="#0a72c7"/>
                    <ellipse cx="7.500" cy="11" rx="3" ry="3.800" stroke="#fff" strokeWidth="2"/>
                </Icon>
            </TaskButton>
            <TaskButton name="Word"
                        state="bg-[#565759] bg-[linear-gradient(#76b9ed,#76b9ed)] bg-[length:100%_2px] bg-bottom bg-no-repeat">
                <Icon w={24} h={22}>
                    <path d="M12 3h11v16H12z" fill="#fff"/>
                    <path d="M15 6.500h6M15 9h6M15 11.500h6M15 14h6M15 16.500h6" stroke="#2b579a"/>
                    <path d="M1 2.500L14 0v22L1 19.500z" fill="#2b579a"/>
                    <path d="M3.500 7.500L5 14l2.500-6 2.500 6 1.500-6.500" stroke="#fff" strokeWidth="1.500"/>
                </Icon>
            </TaskButton>
        </div>
        <div className="flex items-center">
            <button aria-label="Hidden icons" className="mr-2.5"><Icon w={12} h={8}><path d="M1 7l5-5 5 5" stroke="#fff" strokeWidth="1.500"/></Icon></button>
            <Icon w={16} h={14}>
                <path d="M5 3.500h9v7H5M15.500 5.500v3M1.500 1v3M4.500 1v3M3 5v5q0 2 2 2" stroke="#fff"/>
                <path d="M.500 3h5v2L4 7H2L.500 5zM7 5h5v4H6z" fill="#fff"/>
            </Icon>
            <span className="ml-2 flex">
                <Icon w={17} h={14}>
                    <path d="M7 2h9v8H5V7M10 10v3M7 13.500h7" stroke="#fff"/>
                    <path d="M.500.500h5v5h-5zM3 5v5" stroke="#fff"/>
                    <path d="M2 2h2v2H2z" fill="#fff"/>
                </Icon>
            </span>
            <time className="ml-2.5 w-[58px] text-center text-[11px] leading-[18px]">10:39<br/>07/10/2024</time>
            <button aria-label="Notifications" className="ml-[18px] mr-6">
                <Icon w={18} h={18}>
                    <path d="M1 1h16v12H9l-4 4v-4H1z" fill="#fff"/>
                    <path d="M4 4.500h10M4 7.500h10M4 10.500h5" stroke="#252225"/>
                    <circle cx="14" cy="13" r="3.500" fill="#fff" stroke="#252225"/>
                    <path d="M11.500 15.500l5-5" stroke="#252225"/>
                </Icon>
            </button>
        </div>
    </div>
);

const App = () => {
    return (
        <div className="relative flex h-screen flex-col overflow-hidden [font-family:'Open_Sans',sans-serif]">
            <TitleBar/>
            <Ribbon/>
            <Document/>
            <StatusBar/>
            <TaskBar/>
            <ContextMenu/>
        </div>
    );
};

export default App;
